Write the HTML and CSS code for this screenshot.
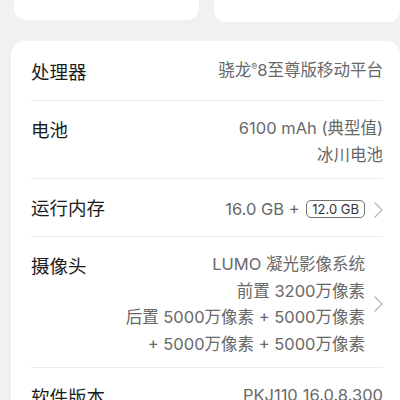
FILE: index.html
```html
<!DOCTYPE html>
<html lang="zh-CN">
<head>
    <meta charset="UTF-8">
    <meta name="viewport" content="width=device-width, initial-scale=1.0">
    <title>关于手机</title>
    <link rel="stylesheet" href="styles.css">
</head>
<body>
    <div class="top-row">
        <div class="tile tile-left"></div>
        <div class="tile tile-right"></div>
    </div>

    <div class="card">
        <div class="row">
            <div class="label">处理器</div>
            <div class="values">
                <div>骁龙<sup class="reg">®</sup>8至尊版移动平台</div>
            </div>
        </div>
        <div class="row">
            <div class="label">电池</div>
            <div class="values">
                <div>6100 mAh (典型值)</div>
                <div>冰川电池</div>
            </div>
        </div>
        <div class="row">
            <div class="label">运行内存</div>
            <div class="side">
                <div class="values">
                    <div>16.0 GB + <span class="badge">12.0 GB</span></div>
                </div>
                <svg class="chevron" width="9" height="16" viewBox="0 0 9 16">
                    <path d="M1 1 L8 8 L1 15" fill="none" stroke="#b8b8b8" stroke-width="1.4" stroke-linecap="round" stroke-linejoin="round"/>
                </svg>
            </div>
        </div>
        <div class="row">
            <div class="label">摄像头</div>
            <div class="side">
                <div class="values">
                    <div>LUMO 凝光影像系统</div>
                    <div>前置 3200万像素</div>
                    <div>后置 5000万像素 + 5000万像素</div>
                    <div>+ 5000万像素 + 5000万像素</div>
                </div>
                <svg class="chevron" width="9" height="16" viewBox="0 0 9 16">
                    <path d="M1 1 L8 8 L1 15" fill="none" stroke="#b8b8b8" stroke-width="1.4" stroke-linecap="round" stroke-linejoin="round"/>
                </svg>
            </div>
        </div>
        <div class="row">
            <div class="label">软件版本</div>
            <div class="values">
                <div>PKJ110_16.0.8.300</div>
            </div>
        </div>
    </div>
</body>
</html>
```

FILE: styles.css
```css
body {
    margin: 0;
    background-color: #f0f1f3;
    font-family: Inter, "Noto Sans CJK SC", sans-serif;
    overflow: hidden;
}
.top-row {
    display: flex;
    padding-left: 14px;
    gap: 15px;
}
.tile {
    background-color: #fff;
    border-radius: 0 0 12px 12px;
}
.tile-left {
    width: 185px;
    height: 20px;
}
.tile-right {
    flex: 1;
    height: 22px;
}
.card {
    background-color: #fff;
    border-radius: 14px;
    margin: 19px 0 0 11px;
    padding: 2px 17px 0 20px;
}
.row {
    display: flex;
    justify-content: space-between;
    align-items: flex-start;
    box-sizing: border-box;
    min-height: 58px;
    padding: 14px 0 10px;
    border-bottom: 1px solid #ececec;
}
.label {
    font-size: 18.5px;
    line-height: 30px;
    color: #1c1c1c;
    white-space: nowrap;
}
.values {
    text-align: right;
    font-size: 16.5px;
    line-height: 26.5px;
    color: #686868;
    white-space: nowrap;
}
.reg {
    font-size: 9px;
    vertical-align: 6px;
    line-height: 0;
}
.side {
    display: flex;
    align-items: center;
    align-self: stretch;
    gap: 9px;
}
.badge {
    display: inline-block;
    font-size: 13px;
    line-height: 16px;
    padding: 0 5px;
    margin-left: 2px;
    border: 1px solid #707070;
    border-radius: 5px;
    color: #333;
    vertical-align: 1px;
}
.chevron {
    display: block;
}
```
